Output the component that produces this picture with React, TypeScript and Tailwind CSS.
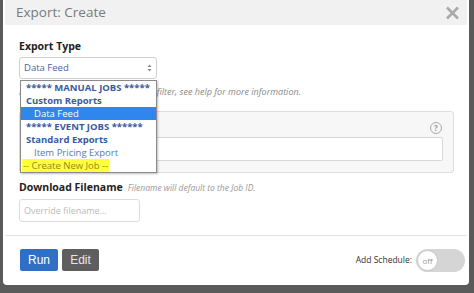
import React from "react";

const options = [
  { label: "***** MANUAL JOBS *****", kind: "group" },
  { label: "Custom Reports", kind: "group" },
  { label: "Data Feed", kind: "selected" },
  { label: "***** EVENT JOBS ******", kind: "group" },
  { label: "Standard Exports", kind: "group" },
  { label: "Item Pricing Export", kind: "item" },
  { label: "-- Create New Job --", kind: "new" },
];

function optionClass(kind: string) {
  switch (kind) {
    case "group":
      return "pl-[5px] font-bold text-[#3b5a9e]";
    case "selected":
      return "pl-[13px] bg-[#2f86ec] text-white";
    case "item":
      return "pl-[13px] text-[#5b78b4]";
    default:
      return "";
  }
}

export default function App() {
  return (
    <div
      className="w-[474px] h-[293px] bg-[#5a5a5a] pl-[3px] pr-[5px] pb-[8px]"
      style={{ fontFamily: '"Open Sans", "Liberation Sans", sans-serif' }}
    >
      <div className="relative flex h-full flex-col rounded-b-[4px] bg-white">
        {/* header */}
        <div className="mx-[2px] flex h-[25px] items-center justify-between bg-[#f1f1f1] pl-[11px] pr-[7px]">
          <span className="text-[13.5px] leading-none text-[#7a7a7a]">Export: Create</span>
          <svg width="15" height="14" viewBox="0 0 15 14" className="text-[#aaaaaa]">
            <path d="M2 1.5 L13 12.5 M13 1.5 L2 12.5" stroke="currentColor" strokeWidth="2.6" />
          </svg>
        </div>

        {/* body */}
        <div className="relative flex-1 px-[16px] pt-[14px]">
          <div className="text-[10.5px] font-bold leading-[14px] text-[#222]">Export Type</div>
          <div className="mt-[4px] flex h-[22px] w-[138px] items-center justify-between rounded-[3px] border border-[#cfcfcf] pl-[4px] pr-[4px]">
            <span className="text-[9.5px] text-[#4a64a0]">Data Feed</span>
            <svg width="5" height="8" viewBox="0 0 5 8" className="text-[#888]">
              <path d="M2.5 0.5 L4.5 3 L0.5 3 Z M2.5 7.5 L4.5 5 L0.5 5 Z" fill="currentColor" />
            </svg>
          </div>
          <div className="mt-[6px] whitespace-nowrap text-[9px] italic leading-[13px] text-[#8a8a8a]">
            Pick a job to run. Each has its own filter, see help for more information.
          </div>

          <div className="mt-[13px] h-[62px] w-[435px] rounded-[3px] border border-[#dedede] bg-[#f7f7f7] pl-[10px] pr-[10px] pt-[8px]">
            <div className="flex h-[16px] items-center justify-end pr-[1px]">
              <div className="flex h-[12px] w-[12px] items-center justify-center rounded-full border border-[#aaa] text-[8px] font-bold leading-none text-[#999]">
                ?
              </div>
            </div>
            <div className="mt-[1px] h-[24px] rounded-[2px] border border-[#d8d8d8] bg-white" />
          </div>

          <div className="mt-[7px] flex items-baseline gap-[5px]">
            <span className="text-[10.5px] font-bold leading-[14px] text-[#222]">Download Filename</span>
            <span className="text-[8.5px] italic text-[#999]">Filename will default to the Job ID.</span>
          </div>
          <div className="mt-[4px] flex h-[23px] w-[121px] items-center rounded-[3px] border border-[#dcdcdc] pl-[4px]">
            <span className="text-[9px] text-[#bbb]">Override filename...</span>
          </div>

          {/* open dropdown list */}
          <div className="absolute left-[17px] top-[55px] w-[137px] border border-[#8a8a8a] bg-white shadow-[1px_1px_2px_rgba(0,0,0,0.25)]">
            {options.map((o) =>
              o.kind === "new" ? (
                <div key={o.label} className="flex h-[13px] items-center pl-[1px]">
                  <span className="whitespace-nowrap bg-[#ffff3a] px-[1px] text-[9.5px] leading-[13px] text-[#8f8a1e]">{o.label}</span>
                </div>
              ) : (
                <div key={o.label} className={`flex h-[13px] items-center whitespace-nowrap text-[9.5px] leading-[13px] ${optionClass(o.kind)}`}>
                  {o.label}
                </div>
              )
            )}
          </div>
        </div>

        {/* footer */}
        <div className="mx-[2px] flex h-[50px] items-start justify-between border-t border-[#e3e3e3] pl-[15px] pr-[2px] pt-[13px]">
          <div className="flex gap-[4px]" style={{ fontFamily: '"Liberation Sans", Arial, sans-serif' }}>
            <div className="flex h-[22px] w-[38px] items-center justify-center rounded-[2px] bg-[#2f6fc5] text-[12px] text-white">Run</div>
            <div className="flex h-[22px] w-[37px] items-center justify-center rounded-[2px] bg-[#5e5e5e] text-[12px] text-[#e6e6e6]">Edit</div>
          </div>
          <div className="flex items-center gap-[4px]">
            <span className="text-[8.5px] text-[#333]">Add Schedule:</span>
            <div className="flex h-[23px] w-[49px] items-center rounded-full bg-[#d5d5d5] pl-[1px]">
              <div className="flex h-[21px] w-[21px] items-center justify-center rounded-full border border-[#c8c8c8] bg-white text-[8px] text-[#999]">
                off
              </div>
            </div>
          </div>
        </div>
      </div>
    </div>
  );
}
